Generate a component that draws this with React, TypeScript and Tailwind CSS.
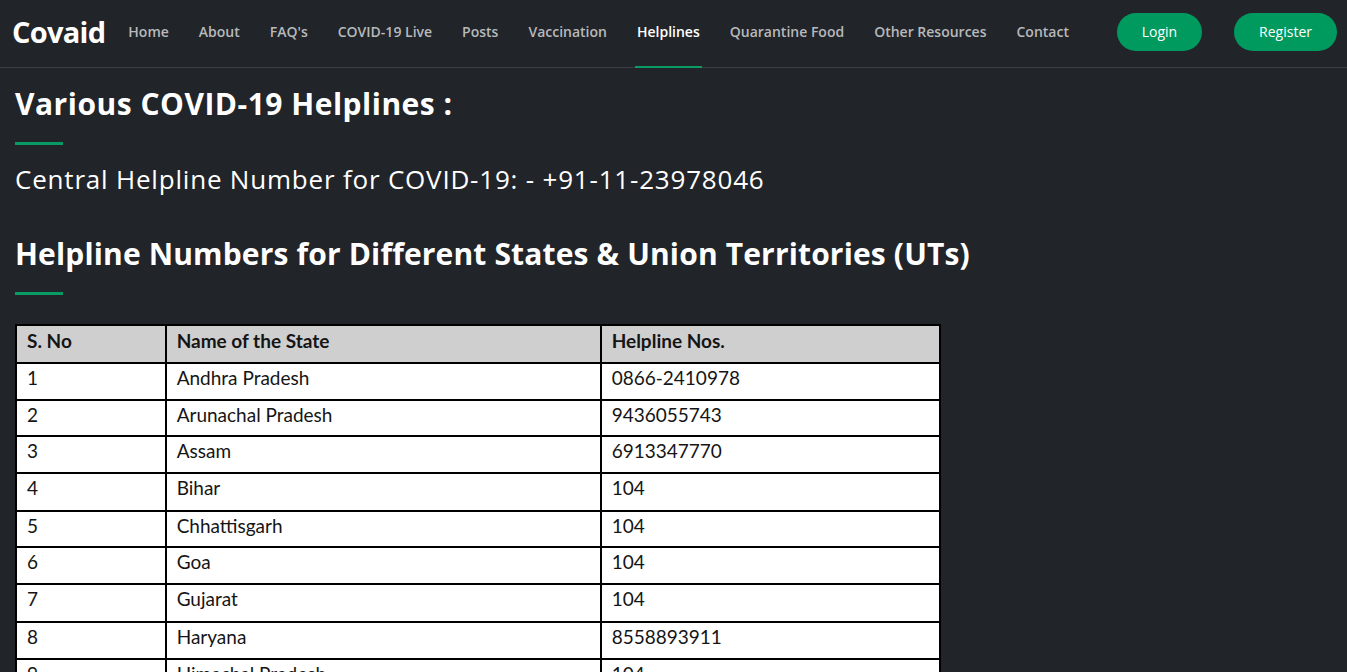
const navLinks = [
  'Home',
  'About',
  "FAQ's",
  'COVID-19 Live',
  'Posts',
  'Vaccination',
  'Helplines',
  'Quarantine Food',
  'Other Resources',
  'Contact',
]

const rows: [string, string, string, string][] = [
  ['1', 'Andhra Pradesh', '0866-2410978', 'h-[37px]'],
  ['2', 'Arunachal Pradesh', '9436055743', 'h-[36px]'],
  ['3', 'Assam', '6913347770', 'h-[37px]'],
  ['4', 'Bihar', '104', 'h-[38px]'],
  ['5', 'Chhattisgarh', '104', 'h-[36px]'],
  ['6', 'Goa', '104', 'h-[37px]'],
  ['7', 'Gujarat', '104', 'h-[38px]'],
  ['8', 'Haryana', '8558893911', 'h-[37px]'],
  ['9', 'Himachal Pradesh', '104', 'h-[37px]'],
]

function Navbar() {
  return (
    <header className="flex h-[68px] items-center border-b border-[#3b3e43] pr-[10px] font-['Open_Sans',sans-serif]">
      <a className="pb-[4px] pl-[12px] pr-[8px] text-[29px] font-bold tracking-tight text-white">Covaid</a>
      <nav className="flex h-full items-stretch">
        {navLinks.map((l) => {
          const active = l === 'Helplines'
          return (
            <a
              key={l}
              className={
                'relative flex items-center px-[15px] pb-[5px] text-[14px] font-semibold ' +
                (active ? 'text-white' : 'text-[#b8b9bb]')
              }
            >
              {l}
              {active ? (
                <span className="absolute bottom-[-1px] left-[13px] right-[13px] h-[2px] bg-[#0a9a63]" />
              ) : null}
            </a>
          )
        })}
      </nav>
      <div className="mb-[4px] ml-auto flex gap-8">
        <button className="h-[38px] rounded-full bg-[#009a5e] px-[25px] text-[14px] text-white">Login</button>
        <button className="h-[38px] rounded-full bg-[#009a5e] px-[25px] text-[14px] text-white">Register</button>
      </div>
    </header>
  )
}

function SectionTitle({children, wide}: {children: string; wide?: boolean}) {
  return (
    <div>
      <h2
        className={
          'text-[30px] font-bold leading-[40px] text-white ' + (wide ? 'tracking-[0.5px]' : 'tracking-[0.15px]')
        }
      >
        {children}
      </h2>
      <div className="mt-[18px] h-[3px] w-[48px] bg-[#0a9a63]" />
    </div>
  )
}

export default function App() {
  return (
    <div className="min-h-[672px] overflow-hidden bg-[#212429]">
      <Navbar />
      <main className="px-[15px] pt-[16px] font-['Open_Sans',sans-serif]">
        <SectionTitle wide>Various COVID-19 Helplines :</SectionTitle>
        <p className="mt-[16px] text-[26px] leading-[36px] tracking-[0.8px] text-white">
          Central Helpline Number for COVID-19: - +91-11-23978046
        </p>
        <div className="mt-[37px]">
          <SectionTitle>Helpline Numbers for Different States &amp; Union Territories (UTs)</SectionTitle>
        </div>
        <table className="mt-[29px] w-[926px] border-collapse border-2 border-black bg-white font-['Lato',sans-serif] text-[19px] leading-[28px] text-[#151515]">
          <colgroup>
            <col className="w-[150px]" />
            <col className="w-[436px]" />
            <col className="w-[340px]" />
          </colgroup>
          <thead>
            <tr className="h-[38px] bg-[#d0cfcf]">
              <th className="border-2 border-black px-[10px] pt-[1px] text-left align-top font-bold">S. No</th>
              <th className="border-2 border-black px-[10px] pt-[1px] text-left align-top font-bold">Name of the State</th>
              <th className="border-2 border-black px-[10px] pt-[1px] text-left align-top font-bold">Helpline Nos.</th>
            </tr>
          </thead>
          <tbody>
            {rows.map(([n, s, p, h]) => (
              <tr key={n} className={h}>
                <td className="border-2 border-black px-[10px] pt-0 align-top">{n}</td>
                <td className="border-2 border-black px-[10px] pt-0 align-top">{s}</td>
                <td className="border-2 border-black px-[10px] pt-0 align-top">{p}</td>
              </tr>
            ))}
          </tbody>
        </table>
      </main>
    </div>
  )
}
